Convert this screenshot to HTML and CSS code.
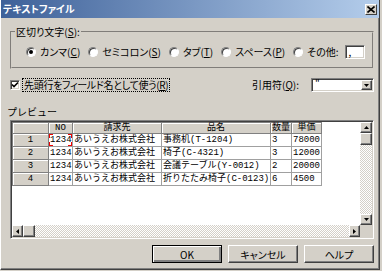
FILE: index.html
```html
<!DOCTYPE html>
<html lang="ja">
<head>
  <meta charset="UTF-8">
  <title>テキストファイル</title>
  <link rel="stylesheet" href="styles.css">
</head>
<body>
  <div class="window">
    <div class="titlebar">
      <span class="title">テキストファイル</span>
      <span class="close">
        <svg width="8" height="7" viewBox="0 0 8 7"><path d="M0.5 0.5 L7.5 6.5 M7.5 0.5 L0.5 6.5" stroke="#000" stroke-width="1.6"/></svg>
      </span>
    </div>

    <div class="content">
      <fieldset class="group">
        <legend>区切り文字(<u>S</u>):</legend>
        <div class="radios">
          <label class="radio checked"><span class="dot"></span><span>カンマ(<u>C</u>)</span></label>
          <label class="radio"><span class="dot"></span><span>セミコロン(<u>S</u>)</span></label>
          <label class="radio"><span class="dot"></span><span>タブ(<u>T</u>)</span></label>
          <label class="radio"><span class="dot"></span><span>スペース(<u>P</u>)</span></label>
          <label class="radio"><span class="dot"></span><span>その他:</span></label>
          <span class="textbox">,</span>
        </div>
      </fieldset>

      <div class="optrow">
        <span class="checkbox">
          <svg width="8" height="8" viewBox="0 0 8 8"><path d="M1 3.5 L3 5.5 L7 1.5" fill="none" stroke="#000" stroke-width="1.6"/></svg>
        </span>
        <span class="check-label">先頭行をフィールド名として使う(<u>R</u>)</span>
        <span class="quote-label">引用符(<u>Q</u>):</span>
        <span class="combo">
          <span class="combo-text">"</span>
          <span class="combo-btn">
            <svg width="5" height="3" viewBox="0 0 5 3"><polygon points="0,0 5,0 2.5,3" fill="#000"/></svg>
          </span>
        </span>
      </div>

      <div class="preview-label">プレビュー</div>

      <div class="grid">
        <div class="table-area">
          <table>
            <colgroup>
              <col style="width:36px">
              <col style="width:24px">
              <col style="width:89px">
              <col style="width:109px">
              <col style="width:21px">
              <col style="width:30px">
            </colgroup>
            <tr>
              <th></th><th>NO</th><th>請求先</th><th>品名</th><th>数量</th><th>単価</th>
            </tr>
            <tr>
              <th>1</th><td class="focus">1234</td><td>あいうえお株式会社</td><td>事務机(T-1204)</td><td>3</td><td>78000</td>
            </tr>
            <tr>
              <th>2</th><td>1234</td><td>あいうえお株式会社</td><td>椅子(C-4321)</td><td>3</td><td>12000</td>
            </tr>
            <tr>
              <th>3</th><td>1234</td><td>あいうえお株式会社</td><td>会議テーブル(Y-0012)</td><td>2</td><td>20000</td>
            </tr>
            <tr>
              <th>4</th><td>1234</td><td>あいうえお株式会社</td><td>折りたたみ椅子(C-0123)</td><td>6</td><td>4500</td>
            </tr>
          </table>
        </div>

        <div class="vscroll">
          <span class="sbtn"><svg width="5" height="3" viewBox="0 0 5 3"><polygon points="0,3 5,3 2.5,0" fill="#000"/></svg></span>
          <span class="thumb"></span>
          <span class="track"></span>
          <span class="sbtn"><svg width="5" height="3" viewBox="0 0 5 3"><polygon points="0,0 5,0 2.5,3" fill="#000"/></svg></span>
        </div>

        <div class="hscroll">
          <span class="sbtn"><svg width="3" height="5" viewBox="0 0 3 5"><polygon points="3,0 3,5 0,2.5" fill="#000"/></svg></span>
          <span class="thumb"></span>
          <span class="track"></span>
          <span class="sbtn"><svg width="3" height="5" viewBox="0 0 3 5"><polygon points="0,0 0,5 3,2.5" fill="#000"/></svg></span>
        </div>

        <div class="corner"></div>
      </div>

      <div class="buttons">
        <button class="btn default">OK</button>
        <button class="btn">キャンセル</button>
        <button class="btn">ヘルプ</button>
      </div>
    </div>
  </div>
</body>
</html>
```

FILE: styles.css
```css
* {
  box-sizing: border-box;
}

body {
  margin: 0;
  background: #d4d0c8;
  color: #000;
  font-family: "Noto Sans CJK JP", sans-serif;
  font-size: 10px;
  font-feature-settings: "palt";
}

u {
  text-decoration: underline;
}

.window {
  width: 380px;
  height: 270px;
  display: flex;
  flex-direction: column;
  border-left: 1px solid #fff;
  border-right: 1px solid #404040;
  border-bottom: 1px solid #404040;
  box-shadow: inset -1px -1px #808080;
}

.titlebar {
  height: 18px;
  display: flex;
  align-items: center;
  padding: 0 2px;
  background: linear-gradient(to right, #3e6199, #b4cdeb);
  color: #fff;
  font-weight: bold;
}

.title {
  line-height: 12px;
}

.close {
  margin-left: auto;
  width: 12px;
  height: 11px;
  display: flex;
  align-items: center;
  justify-content: center;
  background: #d4d0c8;
  border: 1px solid;
  border-color: #fff #404040 #404040 #fff;
}

.content {
  flex: 1;
  display: flex;
  flex-direction: column;
  padding: 8px 5px 0 9px;
}

/* group box */
.group {
  margin: 0;
  padding: 7px 3px 8px 3px;
  border: 2px groove #d4d0c8;
}

.group legend {
  padding: 0 1px;
  line-height: 12px;
}

.radios {
  display: flex;
  align-items: center;
  height: 14px;
  margin-left: 11px;
}

.radio {
  display: flex;
  align-items: center;
  gap: 4px;
  margin-right: 8px;
  line-height: 12px;
  white-space: nowrap;
}

.dot {
  position: relative;
  flex: none;
  width: 10px;
  height: 10px;
  border-radius: 50%;
  background: #fff;
  border: 1px solid;
  border-color: #808080 #fff #fff #808080;
  box-shadow: inset 1px 1px #404040;
}

.radio.checked .dot::after {
  content: "";
  position: absolute;
  left: 2px;
  top: 2px;
  width: 4px;
  height: 4px;
  border-radius: 50%;
  background: #000;
}

.textbox,
.combo,
.checkbox {
  background: #fff;
  border: 1px solid;
  border-color: #808080 #fff #fff #808080;
  box-shadow: inset 1px 1px #404040, inset -1px -1px #d4d0c8;
}

.textbox {
  width: 20px;
  height: 14px;
  margin-left: -2px;
  padding-left: 3px;
  line-height: 12px;
}

/* checkbox row */
.optrow {
  display: flex;
  align-items: center;
  height: 14px;
  margin-top: 9px;
}

.checkbox {
  width: 10px;
  height: 10px;
  display: flex;
  align-items: center;
  justify-content: center;
}

.check-label {
  margin-left: 3px;
  padding: 0 1px;
  line-height: 12px;
  letter-spacing: -0.3px;
  outline: 1px dotted #000;
}

.quote-label {
  margin-left: auto;
  margin-right: 12px;
  line-height: 12px;
}

.combo {
  width: 63px;
  height: 14px;
  display: flex;
  justify-content: space-between;
  padding: 0 1px 0 3px;
}

.combo-text {
  line-height: 10px;
}

.combo-btn,
.sbtn {
  display: flex;
  align-items: center;
  justify-content: center;
  background: #d4d0c8;
  border: 1px solid;
  border-color: #fff #404040 #404040 #fff;
  box-shadow: inset -1px -1px #808080;
}

.combo-btn {
  width: 11px;
  height: 10px;
  margin-top: 1px;
}

.preview-label {
  margin-top: 14px;
  margin-left: -3px;
  line-height: 12px;
  font-feature-settings: normal;
}

/* preview grid */
.grid {
  height: 119px;
  margin-top: 2px;
  display: grid;
  grid-template-columns: 1fr 12px;
  grid-template-rows: 1fr 12px;
  border: 1px solid;
  border-color: #808080 #fff #fff #808080;
  box-shadow: inset 1px 1px #404040, inset -1px -1px #d4d0c8;
  padding: 1px;
}

.table-area {
  background: #fff;
  overflow: hidden;
}

table {
  border-collapse: collapse;
  table-layout: fixed;
  width: 309px;
  font-family: "Liberation Mono", "Noto Sans CJK JP", monospace;
  font-size: 9px;
  font-feature-settings: normal;
}

th {
  height: 11px;
  padding: 0;
  font-weight: normal;
  text-align: center;
  background: #d4d0c8;
  border: 1px solid #808080;
  box-shadow: inset 1px 1px #fff;
  line-height: 10px;
}

td {
  height: 13px;
  padding: 0 0 0 1px;
  border: 1px solid #a0a0a0;
  white-space: nowrap;
  overflow: hidden;
  line-height: 11px;
}

td.focus {
  background:
    linear-gradient(#e00, #e00) left top / 4px 1px no-repeat,
    linear-gradient(#e00, #e00) left top / 1px 4px no-repeat,
    linear-gradient(#e00, #e00) right top / 4px 1px no-repeat,
    linear-gradient(#e00, #e00) right top / 1px 4px no-repeat,
    linear-gradient(#e00, #e00) left bottom / 4px 1px no-repeat,
    linear-gradient(#e00, #e00) left bottom / 1px 4px no-repeat,
    linear-gradient(#e00, #e00) right bottom / 4px 1px no-repeat,
    linear-gradient(#e00, #e00) right bottom / 1px 4px no-repeat;
}

.vscroll,
.hscroll {
  display: flex;
  background: conic-gradient(#fff 25%, #d4d0c8 0 50%, #fff 0 75%, #d4d0c8 0) 0 0 / 2px 2px;
}

.vscroll {
  flex-direction: column;
}

.vscroll .sbtn {
  height: 11px;
}

.vscroll .thumb {
  height: 12px;
}

.hscroll .sbtn {
  width: 11px;
}

.hscroll .thumb {
  width: 12px;
}

.thumb {
  background: #d4d0c8;
  border: 1px solid;
  border-color: #fff #404040 #404040 #fff;
  box-shadow: inset -1px -1px #808080;
}

.track {
  flex: 1;
}

.corner {
  background: #d4d0c8;
}

/* buttons */
.buttons {
  display: flex;
  justify-content: flex-end;
  gap: 6px;
  margin-top: 6px;
}

.btn {
  width: 70px;
  height: 18px;
  padding: 0;
  font: inherit;
  background: #d4d0c8;
  border: 1px solid;
  border-color: #fff #404040 #404040 #fff;
  box-shadow: inset -1px -1px #808080;
}

.btn.default {
  border-color: #000;
  box-shadow: inset 1px 1px #fff, inset -2px -2px #808080;
}
```
